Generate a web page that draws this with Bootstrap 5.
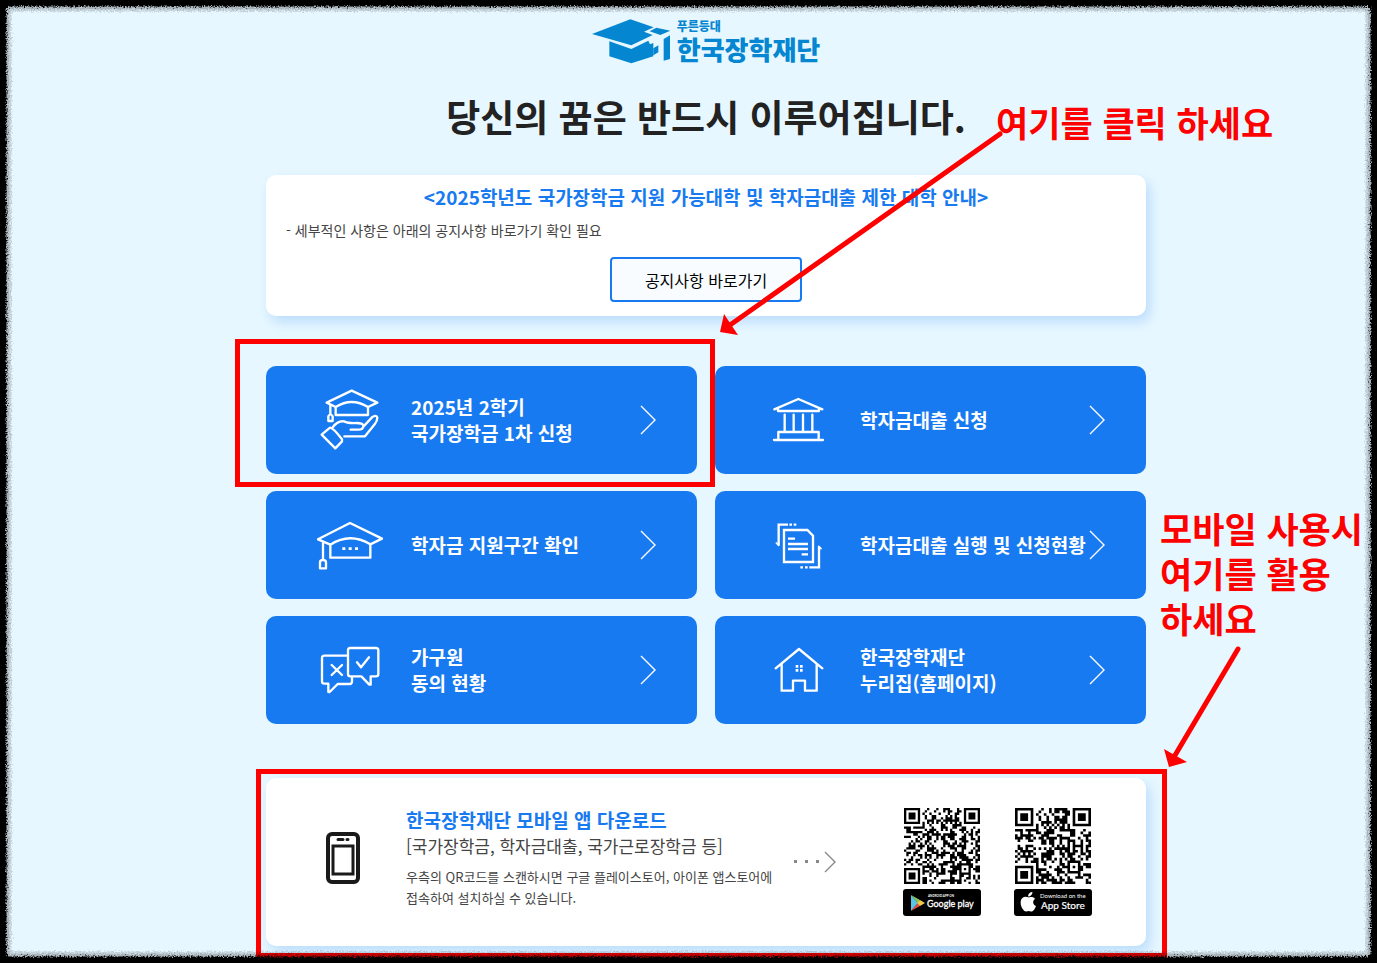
<!DOCTYPE html>
<html lang="ko">
<head>
<meta charset="utf-8">
<meta name="viewport" content="width=device-width, initial-scale=1">
<title>한국장학재단</title>
<link href="https://cdn.jsdelivr.net/npm/bootstrap@5.3.0/dist/css/bootstrap.min.css" rel="stylesheet">
<style>
  :root { --kosaf-blue: #187af1; --note-red: #ff0000; }
  body { background: #e6f7ff; color: #222; font-family: "Noto Sans CJK KR", "Noto Sans", sans-serif; overflow-x: hidden; padding-left: 35px; }
  .page { max-width: 880px; padding-top: 19px; padding-bottom: 17px; }
  .brand { height: 45px; color: #0586d1; text-decoration: none; font-weight: 900; gap: 6px; }
  .brand-top { font-size: 12px; line-height: 14px; }
  .brand-name { font-size: 26px; line-height: 31px; }
  .headline { font-size: 37px; line-height: 56px; margin: 24px 0 31px; white-space: nowrap; }
  .panel { background: #fff; border-radius: 10px; box-shadow: 4px 6px 12px rgba(24, 122, 241, .2); }
  .notice { padding: 8px 20px 14px; margin-bottom: 50px; }
  .title-blue { font-size: 19px; line-height: 28px; color: var(--kosaf-blue); font-weight: 700; margin: 0; }
  .notice-text { font-size: 14px; line-height: 20px; margin: 9px 0 17px; color: #444; }
  .btn-notice { width: 192px; height: 45px; border: 2px solid var(--kosaf-blue); border-radius: 4px; background: #f8fcff; color: #000; font-size: 16px; }
  .tiles { display: grid; grid-template-columns: 1fr 1fr; gap: 17px 18px; margin-bottom: 54px; }
  .tile { min-height: 108px; border-radius: 10px; background: var(--kosaf-blue); color: #fff; text-decoration: none; font-size: 19px; line-height: 26px; font-weight: 700; padding: 0 40px 0 43px; white-space: nowrap; }
  .tile:hover { color: #fff; background: #0f6be0; }
  .tile-icon { width: 80px; height: 80px; margin-right: 22px; flex: none; fill: none; stroke: #fff; stroke-width: 7; stroke-linejoin: round; stroke-linecap: round; }
  .chevron { width: 17px; height: 30px; margin-left: auto; flex: none; fill: none; stroke: #fff; stroke-width: 1.400; }
  .marked { position: relative; }
  .marked::after { content: ""; position: absolute; border: 5px solid var(--note-red); pointer-events: none; }
  .marked-tile::after { inset: -27px -18px -13px -31px; }
  .marked-app::after { inset: -9px -21px -12px -10px; }
  .app { min-height: 168px; padding: 0 54px 0 60px; }
  .app-text { margin: 0 21px 0 46px; padding-bottom: 10px; }
  .app-list { font-size: 17px; line-height: 24px; color: #444; }
  .app-help { font-size: 13px; line-height: 21px; color: #444; margin: 8px 0 0; }
  .stores { gap: 33px; }
  .qr { width: 76px; height: 76px; display: block; margin: 0 auto 5px; }
  .store { display: block; width: 78px; height: 27px; }
  .callout { position: absolute; color: var(--note-red); font-size: 35px; line-height: 45px; font-weight: 700; white-space: nowrap; }
  .callout-click { left: 730px; top: 99px; }
  .callout-mobile { left: 894px; top: 505px; }
  .arrows { position: absolute; left: 0; top: 0; pointer-events: none; stroke: var(--note-red); fill: var(--note-red); }
  .torn-edge { position: fixed; inset: 0; width: 100%; height: 100%; pointer-events: none; }
</style>
</head>
<body>
<main class="page position-relative mx-auto">
  <header class="text-center">
    <a href="#" class="brand d-flex justify-content-center align-items-center">
      <svg width="79" height="45" viewBox="38 27 237 135" fill="#0586d1" aria-hidden="true">
        <path d="M38 72 153 28 223 52 194 65 220 75 156 106Z"/>
        <path d="M90 94 156 117 207 92 212 103 222 99V139L156 160 90 139Z"/>
        <path d="M211 64 231 53 273 62 243 75Z"/>
        <path d="M222 115 237 106V127L222 136ZM253 87 272 76V147L253 152Z"/>
      </svg>
      <span class="d-flex flex-column text-start text-nowrap"><span class="brand-top">푸른등대</span><span class="brand-name">한국장학재단</span></span>
    </a>
    <h1 class="headline fw-bold">당신의 꿈은 반드시 이루어집니다.</h1>
  </header>

  <section class="panel notice text-center">
    <h2 class="title-blue">&lt;2025학년도 국가장학금 지원 가능대학 및 학자금대출 제한 대학 안내&gt;</h2>
    <p class="notice-text text-start">- 세부적인 사항은 아래의 공지사항 바로가기 확인 필요</p>
    <button type="button" class="btn btn-notice p-0">공지사항 바로가기</button>
  </section>

  <nav class="tiles">
    <div class="marked marked-tile d-grid">
      <a href="#" class="tile d-flex align-items-center">
        <svg class="tile-icon" viewBox="27 15 240 240"><path d="M107 96 80 83 155 47 232 83 204 96M107 96V120H204V96Q155 66 107 96M91 90V117M85 138V124Q91 112 98 124V138ZM65 179 90 158Q99 158 126 193V199L106 220ZM98 157Q112 137 132 139 144 145 169 144 190 144 190 152 190 164 174 164H152M190 155 216 127Q229 118 232 128 232 137 224 148L195 184H133"/></svg>
        <span>2025년 2학기<br>국가장학금 1차 신청</span>
        <svg class="chevron" viewBox="0 0 17 30"><path d="M1 1 15 15 1 29"/></svg>
      </a>
    </div>
    <a href="#" class="tile d-flex align-items-center">
      <svg class="tile-icon" viewBox="24 0 240 240"><path d="M73 88 145 57 217 88M84 86V93H207V86M104 104V153M131 104V153M159 104V153M187 104V153M85 178V156H206V178M72 180H219"/></svg>
      <span>학자금대출 신청</span>
      <svg class="chevron" viewBox="0 0 17 30"><path d="M1 1 15 15 1 29"/></svg>
    </a>
    <a href="#" class="tile d-flex align-items-center">
      <svg class="tile-icon" viewBox="27 0 240 240"><path d="M91 119 54 103 150 54 246 101 211 118M91 119V158H211V118Q150 81 91 119M69 111V162M60 190V172Q60 165 69 165 78 165 78 172V190Z"/><path stroke-linecap="butt" stroke-width="8" d="M127 131H136M146 131H155M165 131H174"/></svg>
      <span>학자금 지원구간 확인</span>
      <svg class="chevron" viewBox="0 0 17 30"><path d="M1 1 15 15 1 29"/></svg>
    </a>
    <a href="#" class="tile d-flex align-items-center">
      <svg class="tile-icon" viewBox="24 375 240 240"><path stroke-linecap="butt" stroke-linejoin="miter" d="M102 450H172L189 467V546H102ZM114 476H135M114 492H174M114 507H174M155 523H174M114 434H86V496M118 434H126M131 434H139M178 562H207V500M151 562H159M165 562H173"/><path stroke-width="5" d="M79 489 86 496M213 506 206 499"/></svg>
      <span>학자금대출 실행 및 신청현황</span>
      <svg class="chevron" viewBox="0 0 17 30"><path d="M1 1 15 15 1 29"/></svg>
    </a>
    <a href="#" class="tile d-flex align-items-center">
      <svg class="tile-icon" viewBox="27 378 240 240"><path d="M143 455H73Q66 455 66 462V532Q66 539 73 539H85V564H89L113 540H150Q156 540 156 531V518M151 432H228Q235 432 235 439V509Q235 517 228 517H212V542H208L184 517H151Q144 517 144 510V439Q144 432 151 432ZM95 483 126 513M126 483 95 513M171 475 183 490 207 460"/></svg>
      <span>가구원<br>동의 현황</span>
      <svg class="chevron" viewBox="0 0 17 30"><path d="M1 1 15 15 1 29"/></svg>
    </a>
    <a href="#" class="tile d-flex align-items-center">
      <svg class="tile-icon" viewBox="24 3 240 240"><path d="M77 118 147 60 217 118M95 107V185H129V155H165V185H200V107"/><path stroke-linecap="butt" stroke-width="8" d="M137 112H145M150 112H158M137 124H145M150 124H158"/></svg>
      <span>한국장학재단<br>누리집(홈페이지)</span>
      <svg class="chevron" viewBox="0 0 17 30"><path d="M1 1 15 15 1 29"/></svg>
    </a>
  </nav>

  <section class="marked marked-app">
    <div class="panel app d-flex align-items-center">
      <svg width="34" height="52" viewBox="0 0 34 52" class="flex-shrink-0 mb-2" fill="none" stroke="#1a1a1a" aria-hidden="true"><rect x="2" y="2" width="30" height="48" rx="4" stroke-width="4"/><rect x="7" y="14" width="20" height="28" stroke-width="3"/><path d="M12 7.5H17M21 7.5H22" stroke-width="3" stroke-linecap="round"/></svg>
      <div class="app-text text-nowrap">
        <h2 class="title-blue">한국장학재단 모바일 앱 다운로드</h2>
        <div class="app-list">[국가장학금, 학자금대출, 국가근로장학금 등]</div>
        <p class="app-help">우측의 QR코드를 스캔하시면 구글 플레이스토어, 아이폰 앱스토어에<br>접속하여 설치하실 수 있습니다.</p>
      </div>
      <svg width="44" height="22" viewBox="0 0 44 22" class="flex-shrink-0" fill="none" stroke="#888" aria-hidden="true"><path d="M1 10.500H4M12 10.500H15M23 10.500H26" stroke-width="3"/><path d="M32 1 42 11 32 21" stroke-width="1.400"/></svg>
      <div class="stores d-flex ms-auto">
        <div>
          <svg class="qr" data-code="https://play.google.com/store/apps/details?id=com.mo.kosaf" data-version="4" role="img" aria-label="Google Play QR"></svg>
          <a href="#" class="store"><svg class="d-block" width="78" height="27" viewBox="0 0 78 27"><rect width="78" height="27" rx="3" fill="#000"/><path d="M8 6V22L15 14Z" fill="#5bc5e8"/><path d="M8 6 17 11 15 14Z" fill="#8cc75b"/><path d="M8 22 17 17 15 14Z" fill="#ea4b43"/><path d="M17 11 22 14 17 17 14 14Z" fill="#f6c744"/><text x="25" y="8" font-size="3" font-weight="700" fill="#fff" font-family="Lato, sans-serif">ANDROID APP ON</text><text x="24" y="18" font-size="9" fill="#fff" stroke="#fff" stroke-width=".3" font-family="Lato, sans-serif">Google play</text></svg></a>
        </div>
        <div>
          <svg class="qr" data-code="https://itunes.apple.com/app/id1400580506" data-version="3" role="img" aria-label="App Store QR"></svg>
          <a href="#" class="store"><svg class="d-block" width="78" height="27" viewBox="0 0 78 27"><rect width="78" height="27" rx="3" fill="#000"/><path d="M15 8.500C17 7.500 20 8 21 10 18 12 19 16 22 17 21 20 19 23 17 22.500 15 21.500 14 22 12 22.500 8 22 4 12 9 8.500 11 7 13 8 15 8.500ZM14 7.500C14 5 16 3 18.500 3 18.500 5.500 16.500 7.500 14 7.500Z" fill="#fff"/><text x="26" y="9" font-size="6" fill="#fff" font-family="Lato, sans-serif">Download on the</text><text x="27" y="20" font-size="10" fill="#fff" stroke="#fff" stroke-width=".2" font-family="Lato, sans-serif">App Store</text></svg></a>
        </div>
      </div>
    </div>
  </section>

  <div class="callout callout-click">여기를 클릭 하세요</div>
  <div class="callout callout-mobile">모바일 사용시<br>여기를 활용<br>하세요</div>
  <svg class="arrows" width="1000" height="780" viewBox="266 0 1000 780" aria-hidden="true">
    <path d="M1000 134 730 325M1238 649 1174 757" stroke-width="5" stroke-linecap="round"/>
    <path d="M720 332 724 314 738 335ZM1169 767 1164 749 1187 762Z" stroke="none"/>
  </svg>
</main>

<svg class="torn-edge" aria-hidden="true">
  <defs>
    <filter id="rough" x="0" y="0" width="100%" height="100%">
      <feTurbulence type="fractalNoise" baseFrequency="0.7" numOctaves="2" seed="4" result="n"/>
      <feDisplacementMap in="SourceGraphic" in2="n" scale="6" xChannelSelector="R" yChannelSelector="G"/>
      <feGaussianBlur stdDeviation="0.4"/>
    </filter>
  </defs>
  <g filter="url(#rough)" fill="none">
    <rect width="100%" height="100%" rx="14" stroke="#000" stroke-opacity=".15" stroke-width="23"/>
    <rect width="100%" height="100%" rx="12" stroke="#000" stroke-opacity=".15" stroke-width="18"/>
    <rect width="100%" height="100%" rx="10" stroke="#000" stroke-width="13"/>
  </g>
  <rect width="100%" height="100%" fill="none" stroke="#000" stroke-width="10"/>
</svg>

<script src="https://cdn.jsdelivr.net/npm/bootstrap@5.3.0/dist/js/bootstrap.bundle.min.js"></script>
<script>
// Small QR encoder: byte mode, level L, versions 3 and 4 (one block each).
function qrMatrix(text, version) {
  const size = 17 + 4 * version, total = version === 3 ? [55, 15] : [80, 20];
  const bits = [];
  const put = (v, n) => { for (let i = n - 1; i >= 0; i--) bits.push(v >> i & 1); };
  put(4, 4); put(text.length, 8);
  for (const c of text) put(c.charCodeAt(0), 8);
  put(0, 4);
  while (bits.length % 8) bits.push(0);
  for (let p = 0xec; bits.length < total[0] * 8; p ^= 0xfd) put(p, 8);
  const data = [];
  for (let i = 0; i < bits.length; i += 8) data.push(parseInt(bits.slice(i, i + 8).join(''), 2));
  const mul = (a, b) => { let r = 0; for (let i = 7; i >= 0; i--) { r = r << 1 ^ (r >> 7) * 0x11d; r ^= (b >> i & 1) * a; } return r; };
  const gen = Array(total[1]).fill(0); gen[total[1] - 1] = 1;
  let root = 1;
  for (let i = 0; i < total[1]; i++) {
    for (let j = 0; j < gen.length; j++) { gen[j] = mul(gen[j], root); if (j + 1 < gen.length) gen[j] ^= gen[j + 1]; }
    root = mul(root, 2);
  }
  const ec = Array(total[1]).fill(0);
  for (const b of data) { const f = b ^ ec.shift(); ec.push(0); gen.forEach((g, i) => ec[i] ^= mul(g, f)); }
  const words = data.concat(ec);
  const m = Array.from({ length: size }, () => Array(size).fill(0));
  const fixed = Array.from({ length: size }, () => Array(size).fill(false));
  const set = (x, y, v) => { if (x >= 0 && y >= 0 && x < size && y < size) { m[y][x] = +v; fixed[y][x] = true; } };
  for (let i = 0; i < size; i++) { set(6, i, i % 2 === 0); set(i, 6, i % 2 === 0); }
  for (const [cx, cy] of [[3, 3], [size - 4, 3], [3, size - 4]])
    for (let y = -4; y <= 4; y++) for (let x = -4; x <= 4; x++) { const d = Math.max(Math.abs(x), Math.abs(y)); set(cx + x, cy + y, d !== 2 && d !== 4); }
  for (let y = -2; y <= 2; y++) for (let x = -2; x <= 2; x++) set(size - 7 + x, size - 7 + y, Math.max(Math.abs(x), Math.abs(y)) !== 1);
  const mask = 0, fmt = 1 << 3 | mask;
  let rem = fmt;
  for (let i = 0; i < 10; i++) rem = rem << 1 ^ (rem >> 9) * 0x537;
  const f = (fmt << 10 | rem) ^ 0x5412, bit = i => f >> i & 1;
  for (let i = 0; i <= 5; i++) set(8, i, bit(i));
  set(8, 7, bit(6)); set(8, 8, bit(7)); set(7, 8, bit(8));
  for (let i = 9; i < 15; i++) set(14 - i, 8, bit(i));
  for (let i = 0; i < 8; i++) set(size - 1 - i, 8, bit(i));
  for (let i = 8; i < 15; i++) set(8, size - 15 + i, bit(i));
  set(8, size - 8, 1);
  let k = 0;
  for (let right = size - 1; right >= 1; right -= 2) {
    if (right === 6) right = 5;
    for (let v = 0; v < size; v++) for (let j = 0; j < 2; j++) {
      const x = right - j, y = (right + 1 & 2) === 0 ? size - 1 - v : v;
      if (fixed[y][x]) continue;
      const b = k < words.length * 8 ? words[k >> 3] >> (7 - (k & 7)) & 1 : 0; k++;
      m[y][x] = b ^ ((x + y) % 2 === 0 ? 1 : 0);
    }
  }
  return m;
}
document.querySelectorAll('.qr').forEach(svg => {
  const m = qrMatrix(svg.dataset.code, +svg.dataset.version);
  svg.setAttribute('viewBox', `0 0 ${m.length} ${m.length}`);
  let d = '';
  m.forEach((row, y) => row.forEach((v, x) => { if (v) d += `M${x} ${y}h1v1h-1z`; }));
  svg.innerHTML = `<path d="${d}" fill="#000"/>`;
});
</script>
</body>
</html>
